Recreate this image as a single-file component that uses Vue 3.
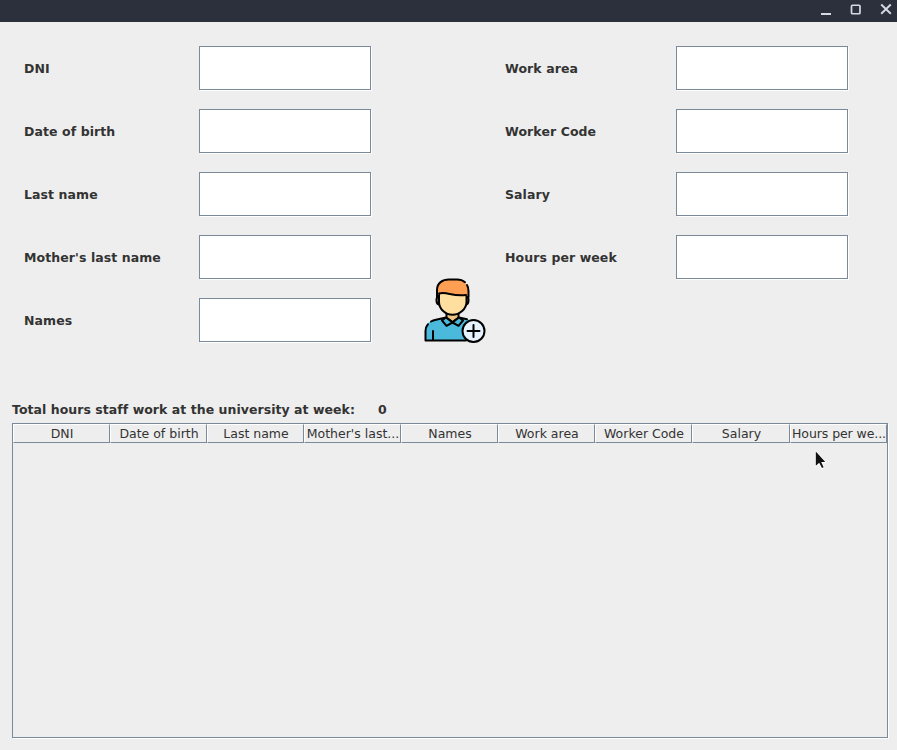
<script setup>
import { ref } from 'vue'

const left = ['DNI', 'Date of birth', 'Last name', "Mother's last name", 'Names']
const right = ['Work area', 'Worker Code', 'Salary', 'Hours per week']
const columns = ['DNI', 'Date of birth', 'Last name', "Mother's last...", 'Names', 'Work area', 'Worker Code', 'Salary', 'Hours per we...']
const total = ref(0)
</script>

<template>
  <div class="window">
    <header class="titlebar">
      <svg class="controls" width="78" height="22" viewBox="0 0 78 22" fill="none" stroke="#d3dae3">
        <path d="M2 14H12" stroke-width="2" />
        <rect x="32.5" y="5.25" width="8.5" height="8.5" rx="1" stroke-width="1.7" />
        <path d="M62.2 4.5L71.8 13.7M71.8 4.5L62.2 13.7" stroke-width="1.9" />
      </svg>
    </header>

    <main class="content">
      <section class="form">
        <div class="fields fields-left">
          <label v-for="name in left" :key="name" class="field">
            <span class="bold">{{ name }}</span>
            <input type="text" />
          </label>
        </div>
        <button class="add" type="button" aria-label="Add">
          <svg width="64" height="66" viewBox="0 0 64 66" stroke="#000" stroke-width="2" stroke-linecap="round" stroke-linejoin="round">
            <path d="M14 19C11.8 19 11.8 26 15 26.500M43 19C45.200 19 45.200 26 42 26.500" fill="#c98f5a" />
            <path d="M22.500 34V39.500L28.500 44L34.500 39.500V34" fill="#f0c583" />
            <path d="M1.500 62.500V53C1.500 47 5 43 10 42L21 39.500L28.500 44L36 39.500L46 42L56 62.500Z" fill="#4bb9dc" stroke="none" />
            <path d="M42 62.500H1.500V53C1.500 50 2.500 48 4 46.200M7 43.500Q9 42.300 12 41.700L22 39.500L28.500 44.500L35 39.500L43 41.300M9 53V62M21.500 39.800L18 42.500L22.500 47.800L28.500 44.500L34.500 47.800L39 42.500L35.500 39.800" fill="none" />
            <path d="M15 14V24C15 31 21.500 36.800 28.500 36.800S42.500 31 42.500 24V14Z" fill="#ffdf9f" />
            <path d="M13 18V12C13 5 18.500 1.500 25 1.500H33C39.500 1.500 44.500 6 44.500 13V18L41.500 17C35 18 31 17 27 15.800C22 14.400 18 14.500 15.500 15.500Z" fill="#ff9f53" stroke="none" />
            <path d="M13 19V12C13 5 18.500 1.500 25 1.500H33C36.500 1.500 39 2.500 41 4.200M43 7Q44.500 9.500 44.500 13V19M15 15.500C23 13 28 19 42 17" fill="none" />
            <circle cx="49.5" cy="53" r="11" fill="#e6f3ff" />
            <path d="M49.5 47V59M43.5 53H55.5" fill="none" />
          </svg>
        </button>
        <div class="fields fields-right">
          <label v-for="name in right" :key="name" class="field">
            <span class="bold">{{ name }}</span>
            <input type="text" />
          </label>
        </div>
      </section>

      <p class="total bold"><span>Total hours staff work at the university at week:</span><span class="count">{{ total }}</span></p>

      <section class="table">
        <div class="head">
          <div v-for="c in columns" :key="c" class="cell">{{ c }}</div>
        </div>
      </section>
    </main>

    <svg class="cursor" width="14" height="22" viewBox="0 0 14 22">
      <path d="M1.5 0.8V16.800L5 13.800L7.500 18.800L10.200 17.500L7.900 12.700H12.300Z" fill="#fff" stroke="#fff" stroke-width="1" />
      <path d="M1.8 1.5V15.800L5.200 12.800L8 18L9.600 17.200L7.200 12H11.300Z" fill="#111" />
    </svg>
  </div>
</template>

<style>
body { margin: 0; background: #eee; }
</style>

<style scoped>
.window { position: relative; width: 897px; height: 750px; background: #eee; color: #333; font: 12.5px "DejaVu Sans", sans-serif; overflow: hidden; }
.titlebar { height: 22px; background: #2c303c; display: flex; justify-content: flex-end; }
.content { padding: 24px 9px 0 12px; }
.form { display: flex; height: 356px; padding-left: 12px; }
.fields { display: grid; grid-auto-rows: 44px; row-gap: 19px; align-content: start; }
.field { display: grid; align-items: center; }
.fields-left .field { grid-template-columns: 175px 172px; }
.fields-right .field { grid-template-columns: 171px 172px; }
.bold { font-weight: bold; letter-spacing: 0.04px; white-space: nowrap; }
.field .bold { padding-top: 1px; letter-spacing: 0.08px; }
input { box-sizing: border-box; width: 172px; height: 44px; padding: 0 4px; border: 1px solid #7a8a99; border-radius: 0; background: #fff; box-shadow: 1px 1px 0 #fff; outline: none; font: inherit; }
.add { align-self: flex-start; width: 64px; height: 66px; margin: 232px 17px 0 53px; padding: 0; border: 0; background: none; }
.add svg { display: block; }
.total { margin: 0; height: 21px; line-height: 16px; display: flex; }
.count { margin-left: 23px; }
.table { box-sizing: border-box; width: 876px; height: 315px; border: 1px solid #7a8a99; box-shadow: 1px 1px 0 #fff; }
.head { display: grid; grid-template-columns: repeat(7, 97px) 98px 97px; }
.cell { box-sizing: border-box; height: 19px; padding-left: 1px; border: 1px solid #fff; border-right-color: #7a8a99; border-bottom-color: #7a8a99; text-align: center; line-height: 17px; white-space: nowrap; }
.cell:last-child { letter-spacing: -0.08px; }
.cursor { position: absolute; left: 814px; top: 450px; }
</style>
